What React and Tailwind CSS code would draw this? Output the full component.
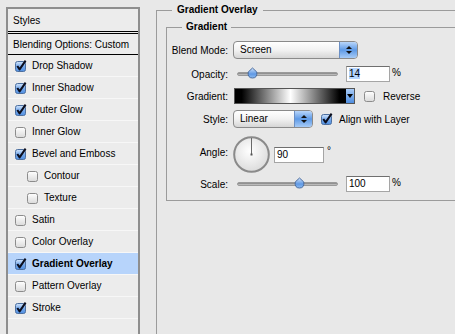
import React from "react";

function CheckBox({ checked }) {
  if (checked) {
    return (
      <svg width="13" height="12" viewBox="0 0 13 12" className="shrink-0">
        <defs>
          <linearGradient id="cbOn" x1="0" y1="0" x2="0" y2="1">
            <stop offset="0" stopColor="#d3e5fb" />
            <stop offset="0.5" stopColor="#77aaec" />
            <stop offset="1" stopColor="#4f8ee0" />
          </linearGradient>
        </defs>
        <rect x="0.5" y="1.5" width="10" height="10" rx="2" fill="url(#cbOn)" stroke="#4d6f9f" />
        <path d="M2.3 6 L4.6 9.4 L10.6 0.6" fill="none" stroke="#0b0d1c" strokeWidth="2" strokeLinejoin="round" />
      </svg>
    );
  }
  return (
    <svg width="13" height="12" viewBox="0 0 13 12" className="shrink-0">
      <defs>
        <linearGradient id="cbOff" x1="0" y1="0" x2="0" y2="1">
          <stop offset="0" stopColor="#ffffff" />
          <stop offset="1" stopColor="#dadada" />
        </linearGradient>
      </defs>
      <rect x="0.5" y="1.5" width="10" height="10" rx="2" fill="url(#cbOff)" stroke="#8c8c8c" />
    </svg>
  );
}

const styles = [
  { label: "Drop Shadow", on: true },
  { label: "Inner Shadow", on: true },
  { label: "Outer Glow", on: true },
  { label: "Inner Glow", on: false },
  { label: "Bevel and Emboss", on: true },
  { label: "Contour", on: false, sub: true },
  { label: "Texture", on: false, sub: true },
  { label: "Satin", on: false },
  { label: "Color Overlay", on: false },
  { label: "Gradient Overlay", on: true, active: true },
  { label: "Pattern Overlay", on: false },
  { label: "Stroke", on: true },
];

function Popup({ value, width }) {
  return (
    <div
      className="flex h-[18px] rounded-[4px] border border-[#8a8a8a] bg-linear-to-b from-white via-[#f2f2f2] to-[#d6d6d6] overflow-hidden shrink-0"
      style={{ width }}
    >
      <span className="flex-1 pl-[6px] leading-[16px]">{value}</span>
      <span className="w-[18px] border-l border-[#6b8fc4] bg-linear-to-b from-[#b9d6fa] via-[#5e9ae6] to-[#a7cbf6] flex flex-col items-center justify-center gap-[2px]">
        <svg width="6" height="3" viewBox="0 0 6 3"><path d="M3 0 L6 3 L0 3 Z" fill="#111" /></svg>
        <svg width="6" height="3" viewBox="0 0 6 3"><path d="M0 0 L6 0 L3 3 Z" fill="#111" /></svg>
      </span>
    </div>
  );
}

function Slider({ pos }) {
  return (
    <div className="relative w-[101px] h-[12px] ml-[4px] shrink-0 flex items-center">
      <div className="w-full h-[4px] rounded-full bg-linear-to-b from-[#7d7d7d] to-[#cfcfcf] border border-[#9a9a9a]" />
      <svg width="11" height="12" viewBox="0 0 11 12" className="absolute top-[-1px]" style={{ left: pos - 5 }}>
        <defs>
          <linearGradient id="thumb" x1="0" y1="0" x2="0" y2="1">
            <stop offset="0" stopColor="#cfe2fb" />
            <stop offset="0.6" stopColor="#5e98e4" />
            <stop offset="1" stopColor="#8fbdf3" />
          </linearGradient>
        </defs>
        <path d="M5.5 1 L9.8 5 Q10.5 11 5.5 11 Q0.5 11 1.2 5 Z" fill="url(#thumb)" stroke="#4b6d9f" />
      </svg>
    </div>
  );
}

function Field({ children, width }) {
  return (
    <div
      className="h-[16px] bg-white border border-[#a5a5a5] border-t-[#6f6f6f] pl-[2px] leading-[14px] shrink-0"
      style={{ width }}
    >
      {children}
    </div>
  );
}

function Label({ children }) {
  return <span className="w-[66px] pr-[5px] text-right shrink-0 whitespace-nowrap">{children}</span>;
}

export default function App() {
  return (
    <div className="w-[455px] h-[334px] overflow-hidden bg-[#e8e8e8] flex font-['Liberation_Sans',Arial,sans-serif] text-[10px] text-black">
      <div className="ml-[6px] mt-[7px] w-[134px] shrink-0 border-2 border-b-0 border-[#8e8e8e] bg-[#ececec] flex flex-col">
        <div className="h-[22px] pl-[5px] flex items-center">Styles</div>
        <div className="h-[3px] border-y border-black" />
        <div className="h-[21px] pl-[5px] flex items-center border-b border-black">Blending Options: Custom</div>
        {styles.map((s) => (
          <div
            key={s.label}
            className={
              "h-[22px] flex items-center gap-[2px] border-b border-[#f7f7f7] " +
              (s.sub ? "pl-[19px] " : "pl-[7px] ") +
              (s.active ? "bg-[#b7d4fb] font-bold" : "")
            }
          >
            <CheckBox checked={s.on} />
            <span className="ml-[2px]">{s.label}</span>
          </div>
        ))}
      </div>

      <fieldset className="ml-[16px] mt-[4px] w-[330px] shrink-0 border-l border-t border-[#9b9b9b] pl-[9px] pt-[5px]">
        <legend className="ml-[6px] px-[5px] font-bold leading-[12px]">Gradient Overlay</legend>
        <fieldset className="w-[300px] border border-r-0 border-[#9b9b9b] pt-[8px] pb-[8px]">
          <legend className="ml-[15px] px-[4px] font-bold leading-[12px]">Gradient</legend>

          <div className="flex items-center h-[18px]">
            <Label>Blend Mode:</Label>
            <Popup value="Screen" width={125} />
          </div>

          <div className="flex items-center h-[16px] mt-[7px]">
            <Label>Opacity:</Label>
            <Slider pos={15} />
            <div className="ml-[8px]">
              <Field width={44}>
                <span className="bg-[#b5d5ff]">14</span>
              </Field>
            </div>
            <span className="ml-[2px] -mt-[4px]">%</span>
          </div>

          <div className="flex items-center h-[16px] mt-[6px]">
            <Label>Gradient:</Label>
            <div className="ml-[1px] w-[121px] h-[16px] flex border border-[#555] shrink-0">
              <div className="flex-1 bg-[linear-gradient(to_right,#000_6%,#fff_50%,#000_94%)]" />
              <div className="w-[8px] bg-linear-to-b from-[#a9cbf6] to-[#4f8ee0] flex items-center justify-center">
                <svg width="6" height="4" viewBox="0 0 6 4"><path d="M0 0 L6 0 L3 4 Z" fill="#000" /></svg>
              </div>
            </div>
            <div className="ml-[9px] flex items-center">
              <CheckBox checked={false} />
            </div>
            <span className="ml-[6px]">Reverse</span>
          </div>

          <div className="flex items-center h-[18px] mt-[6px]">
            <Label>Style:</Label>
            <Popup value="Linear" width={80} />
            <div className="ml-[8px] flex items-center">
              <CheckBox checked={true} />
            </div>
            <span className="ml-[5px]">Align with Layer</span>
          </div>

          <div className="flex items-center h-[37px] mt-[8px]">
            <Label>
              <span className="relative -top-[2px]">Angle:</span>
            </Label>
            <svg width="37" height="37" viewBox="0 0 37 37" className="shrink-0">
              <defs>
                <radialGradient id="dial" cx="0.45" cy="0.4" r="0.6">
                  <stop offset="0" stopColor="#ffffff" />
                  <stop offset="1" stopColor="#dcdcdc" />
                </radialGradient>
              </defs>
              <circle cx="18.5" cy="18.5" r="17.3" fill="url(#dial)" stroke="#8a8a8a" strokeWidth="2" />
              <line x1="18.5" y1="18.5" x2="18.5" y2="2" stroke="#6a6a6a" strokeWidth="1" />
              <rect x="17.5" y="17.5" width="2" height="2" fill="#555" />
            </svg>
            <div className="ml-[4px]">
              <Field width={50}>90</Field>
            </div>
            <span className="ml-[3px] -mt-[8px]">°</span>
          </div>

          <div className="flex items-center h-[16px] mt-[3px]">
            <Label>Scale:</Label>
            <Slider pos={62} />
            <div className="ml-[8px]">
              <Field width={44}>100</Field>
            </div>
            <span className="ml-[2px] -mt-[4px]">%</span>
          </div>
        </fieldset>
      </fieldset>
    </div>
  );
}
